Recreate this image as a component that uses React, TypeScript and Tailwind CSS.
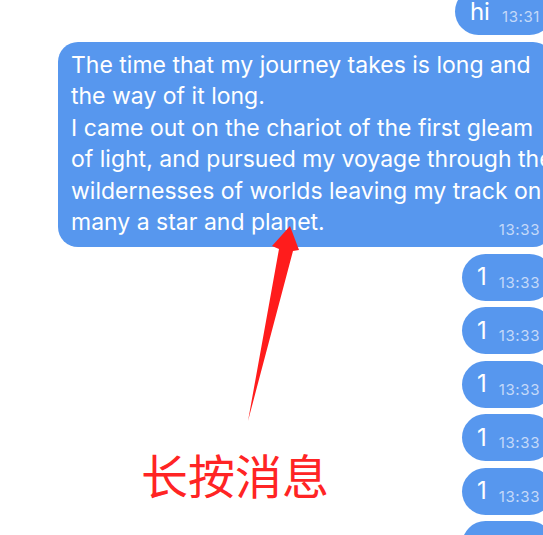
import React from 'react';

const longText = [
  'The time that my journey takes is long and',
  'the way of it long.',
  'I came out on the chariot of the first gleam',
  'of light, and pursued my voyage through the',
  'wildernesses of worlds leaving my track on',
  'many a star and planet.',
];

const shortMessages = ['1', '1', '1', '1', '1', '1'];

const Time: React.FC<{ value: string }> = ({ value }) => (
  <span className="ml-[12px] translate-y-[5px] text-[15px] leading-none tracking-[0.6px] text-[#c4d9f9]">
    {value}
  </span>
);

const ShortBubble: React.FC<{ text: string; time: string }> = ({ text, time }) => (
  <div className="flex h-[47px] shrink-0 items-center rounded-full bg-[#5797ee] pl-[15px] pr-[13px]">
    <span className="text-[24px] leading-none text-white">{text}</span>
    <Time value={time} />
  </div>
);

const App: React.FC = () => {
  return (
    <div
      className="relative h-[535px] w-full overflow-hidden bg-white"
      style={{ fontFamily: 'Inter, "Noto Sans CJK SC", sans-serif' }}
    >
      <div className="-mt-[12px] flex w-[553px] flex-col items-end gap-[6.5px]">
        <ShortBubble text="hi" time="13:31" />

        <div className="w-[495px] shrink-0 overflow-hidden rounded-[20px] bg-[#5797ee] pb-[8px] pl-[13px] pr-[13px] pt-[8px]">
          {longText.map((line, i) =>
            i === longText.length - 1 ? (
              <div key={i} className="flex items-baseline justify-between">
                <span className="whitespace-nowrap text-[23px] leading-[31.6px] text-white">{line}</span>
                <Time value="13:33" />
              </div>
            ) : (
              <div key={i} className="whitespace-nowrap text-[23px] leading-[31.6px] text-white">
                {line}
              </div>
            )
          )}
        </div>

        {shortMessages.map((m, i) => (
          <ShortBubble key={i} text={m} time="13:33" />
        ))}
      </div>

      {/* long-press hint */}
      <svg className="pointer-events-none absolute left-0 top-0" width="543" height="535">
        <polygon
          points="290,226 299,250 293,251 248,421 279,249 272,246"
          fill="#ff1c1c"
        />
      </svg>
      <div className="absolute left-[141px] top-[453px] text-[47px] leading-none text-[#ff2424]">
        长按消息
      </div>
    </div>
  );
};

export default App;
